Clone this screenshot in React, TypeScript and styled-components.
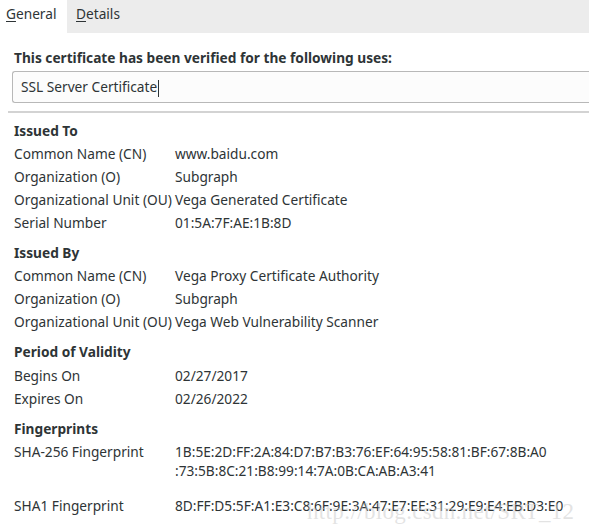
import React from "react";
import styled, { createGlobalStyle } from "styled-components";

const Global = createGlobalStyle`
  html, body { margin: 0; padding: 0; background: #ffffff; }
  body {
    font-family: "Noto Sans", "Open Sans", "DejaVu Sans", sans-serif;
    font-size: 13.7px;
    color: #2e3436;
    width: 589px;
    height: 529px;
    overflow: hidden;
  }
`;

const Window = styled.div`
  position: relative;
  width: 589px;
  height: 529px;
  background: #ffffff;
  overflow: hidden;
`;

const TabBar = styled.div`
  display: flex;
  height: 33px;
  background: #ececec;
`;

const Tab = styled.div<{ $active?: boolean }>`
  display: flex;
  align-items: center;
  box-sizing: border-box;
  width: ${(p) => (p.$active ? "67px" : "63px")};
  padding-left: ${(p) => (p.$active ? "6px" : "9px")};
  padding-bottom: 6px;
  background: ${(p) => (p.$active ? "#ffffff" : "transparent")};
  color: #2e3436;
  u { text-decoration: underline; text-underline-offset: 2px; }
`;

const Content = styled.div`
  display: flex;
  flex-direction: column;
`;

const Title = styled.div`
  margin: 15px 0 0 14px;
  font-weight: 700;
  line-height: 19px;
`;

const UsesBox = styled.div`
  margin: 4px 0 0 12px;
  height: 30px;
  border: 1px solid #b8b8b8;
  border-right: none;
  border-radius: 3px 0 0 3px;
  background: #fcfcfc;
  display: flex;
  align-items: center;
  padding-left: 8px;
`;

const Caret = styled.span`
  display: inline-block;
  width: 1px;
  height: 17px;
  background: #2e3436;
  margin-left: 1px;
  vertical-align: middle;
`;

const Separator = styled.div`
  margin: 8px 0 0 8px;
  height: 2px;
  background: #d3d3d3;
`;

const Section = styled.div<{ $first?: boolean }>`
  margin: ${(p) => (p.$first ? "8px" : "11px")} 0 0 14px;
  display: grid;
  grid-template-columns: 161px 1fr;
  row-gap: 4px;
  line-height: 19px;
`;

const SectionHeading = styled.div<{ $extra?: boolean }>`
  grid-column: 1 / -1;
  font-weight: 700;
  padding-bottom: ${(p) => (p.$extra ? "1px" : "0")};
`;

const Label = styled.div`
  white-space: nowrap;
`;

const Value = styled.div<{ $gapAfter?: boolean }>`
  white-space: pre;
  padding-bottom: ${(p) => (p.$gapAfter ? "12px" : "0")};
`;

const Watermark = styled.div`
  position: absolute;
  left: 307px;
  top: 499px;
  font-family: "Liberation Serif", "DejaVu Serif", serif;
  font-size: 23px;
  line-height: 26px;
  color: rgba(200, 200, 200, 0.5);
  letter-spacing: 0.3px;
  pointer-events: none;
`;

type Row = [string, string, boolean?];

const sections: { title: string; extra?: boolean; rows: Row[] }[] = [
  {
    title: "Issued To",
    rows: [
      ["Common Name (CN)", "www.baidu.com"],
      ["Organization (O)", "Subgraph"],
      ["Organizational Unit (OU)", "Vega Generated Certificate"],
      ["Serial Number", "01:5A:7F:AE:1B:8D"],
    ],
  },
  {
    title: "Issued By",
    rows: [
      ["Common Name (CN)", "Vega Proxy Certificate Authority"],
      ["Organization (O)", "Subgraph"],
      ["Organizational Unit (OU)", "Vega Web Vulnerability Scanner"],
    ],
  },
  {
    title: "Period of Validity",
    extra: true,
    rows: [
      ["Begins On", "02/27/2017"],
      ["Expires On", "02/26/2022"],
    ],
  },
  {
    title: "Fingerprints",
    rows: [
      [
        "SHA-256 Fingerprint",
        "1B:5E:2D:FF:2A:84:D7:B7:B3:76:EF:64:95:58:81:BF:67:8B:A0\n:73:5B:8C:21:B8:99:14:7A:0B:CA:AB:A3:41",
        true,
      ],
      ["SHA1 Fingerprint", "8D:FF:D5:5F:A1:E3:C8:6F:9E:3A:47:E7:EE:31:29:E9:E4:EB:D3:E0"],
    ],
  },
];

export default function App() {
  return (
    <Window>
      <Global />
      <TabBar>
        <Tab $active>
          <span>
            <u>G</u>eneral
          </span>
        </Tab>
        <Tab>
          <span>
            <u>D</u>etails
          </span>
        </Tab>
      </TabBar>
      <Content>
        <Title>This certificate has been verified for the following uses:</Title>
        <UsesBox>
          <span>
            SSL Server Certificate
            <Caret />
          </span>
        </UsesBox>
        <Separator />
        {sections.map((s, i) => (
          <Section key={s.title} $first={i === 0}>
            <SectionHeading $extra={s.extra}>{s.title}</SectionHeading>
            {s.rows.map(([l, v, g]) => (
              <React.Fragment key={l}>
                <Label>{l}</Label>
                <Value $gapAfter={g}>{v}</Value>
              </React.Fragment>
            ))}
          </Section>
        ))}
      </Content>
      <Watermark>http://blog.csdn.net/SRT_12</Watermark>
    </Window>
  );
}
